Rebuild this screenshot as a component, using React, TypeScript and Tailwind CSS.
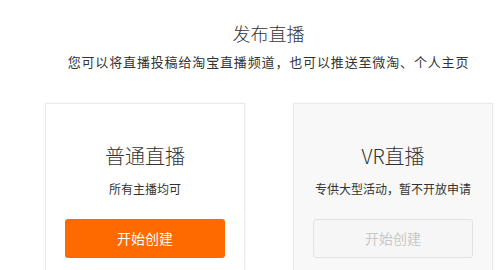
export default function App() {
  const font = { fontFamily: '"Noto Sans CJK SC", "Liberation Sans", sans-serif' };
  return (
    <div className="w-[501px] h-[270px] overflow-hidden bg-white text-[#333]" style={font}>
      <div className="ml-[45px] w-[447px] flex flex-col">
        <h1 className="mt-[20px] text-center text-[18px] leading-[26px] font-light">发布直播</h1>
        <p className="mt-[6px] text-center text-[13px] leading-[20px] tracking-[0.85px]">
          您可以将直播投稿给淘宝直播频道，也可以推送至微淘、个人主页
        </p>
        <div className="mt-[31px] flex gap-[48px]">
          <div className="w-[200px] h-[200px] border border-[#ebebeb] bg-white shadow-[0_0_3px_rgba(0,0,0,0.06)] flex flex-col items-center pt-[38px] px-[20px]">
            <div className="text-[20px] leading-[28px] font-light">普通直播</div>
            <div className="mt-[10px] text-[12px] leading-[18px]">所有主播均可</div>
            <button
              type="button"
              className="mt-[21px] w-[160px] h-[39px] rounded-[3px] bg-[#ff6a00] text-white text-[14px]"
            >
              开始创建
            </button>
          </div>
          <div className="w-[200px] h-[200px] border border-[#ebebeb] bg-[#f8f8f9] shadow-[0_0_3px_rgba(0,0,0,0.06)] flex flex-col items-center pt-[38px] px-[20px]">
            <div className="text-[20px] leading-[28px] font-light">VR直播</div>
            <div className="mt-[10px] text-[12px] leading-[18px]">专供大型活动，暂不开放申请</div>
            <button
              type="button"
              disabled
              className="mt-[21px] w-[160px] h-[39px] rounded-[3px] border border-[#e3e3e3] bg-[#f6f6f7] text-[#c8c8c8] text-[14px]"
            >
              开始创建
            </button>
          </div>
        </div>
      </div>
    </div>
  );
}
